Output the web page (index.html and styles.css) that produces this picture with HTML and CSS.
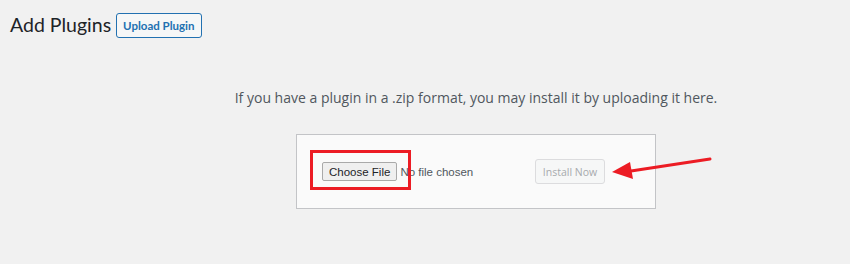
FILE: index.html
```html
<!DOCTYPE html>
<html lang="en">
<head>
    <meta charset="UTF-8">
    <meta name="viewport" content="width=device-width, initial-scale=1.0">
    <title>Add Plugins</title>
    <link rel="stylesheet" href="styles.css">
</head>
<body>
    <div class="wrap">
        <header class="page-head">
            <h1>Add Plugins</h1>
            <button type="button" class="upload-toggle">Upload Plugin</button>
        </header>

        <!-- Upload form -->
        <div class="upload-plugin">
            <p class="install-help">If you have a plugin in a .zip format, you may install it by uploading it here.</p>
            <form class="upload-form">
                <input type="file" id="pluginzip" name="pluginzip">
                <button type="button" class="install-btn" disabled>Install Now</button>

                <!-- annotations -->
                <span class="mark-box"></span>
                <svg class="mark-arrow" width="104" height="24" viewBox="0 0 104 24">
                    <line x1="99" y1="4" x2="20" y2="16" stroke="#ec1c24" stroke-width="3" stroke-linecap="round"/>
                    <polygon points="1,17 19,7 22,24" fill="#ec1c24"/>
                </svg>
            </form>
        </div>
    </div>
</body>
</html>
```
FILE: styles.css
```css
body {
    margin: 0;
    padding: 0;
    background-color: #f1f1f1;
    font-family: "Open Sans", "Noto Sans", sans-serif;
    color: #1d2327;
}
.wrap {
    padding: 10px 0 0 10px;
}
.page-head {
    display: flex;
    align-items: center;
    gap: 5px;
}
.page-head h1 {
    margin: 0;
    font-family: Lato, sans-serif;
    font-weight: 400;
    font-size: 19.5px;
    line-height: 29px;
    color: #1d2327;
}
.upload-toggle {
    margin-top: 1px;
    height: 25px;
    padding: 0 6px;
    background-color: #f6f7f7;
    color: #2271b1;
    border: 1px solid #2271b1;
    border-radius: 3px;
    font-family: Lato, sans-serif;
    font-size: 11.5px;
    font-weight: 700;
    cursor: pointer;
}
.upload-plugin {
    display: flex;
    flex-direction: column;
    align-items: center;
    padding-left: 92px;
}
.install-help {
    margin: 49px 0 26px;
    font-size: 14px;
    line-height: 20px;
    color: #50575e;
}
.upload-form {
    position: relative;
    display: flex;
    align-items: center;
    width: 333px;
    height: 73px;
    padding-left: 25px;
    background-color: #fafafa;
    border: 1px solid #c3c4c7;
}
.upload-form input[type="file"] {
    width: 213px;
    font-family: "Liberation Sans", Arial, sans-serif;
    font-size: 11.5px;
    color: #50575e;
}
.upload-form input[type="file"]::file-selector-button {
    height: 19px;
    margin-right: 3px;
    padding: 0 6px;
    font-family: "Liberation Sans", Arial, sans-serif;
    font-size: 11.5px;
    color: #1d2327;
    background-color: #efefef;
    border: 1px solid #a9a9a9;
    border-radius: 2px;
}
.install-btn {
    width: 70px;
    height: 25px;
    padding: 0;
    background-color: #f6f7f7;
    color: #a7aaad;
    border: 1px solid #dcdcde;
    border-radius: 3px;
    font-family: "Open Sans", sans-serif;
    font-size: 10.5px;
}
.mark-box {
    position: absolute;
    left: 13px;
    top: 15px;
    width: 95px;
    height: 34px;
    border: 3px solid #ec1c24;
}
.mark-arrow {
    position: absolute;
    left: 314px;
    top: 20px;
}
```
